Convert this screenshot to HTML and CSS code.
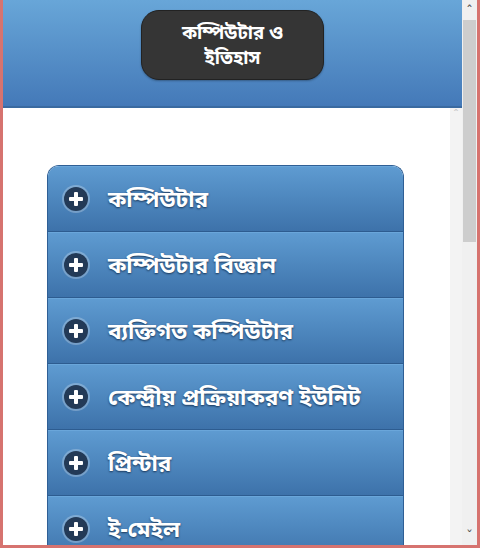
FILE: index.html
```html
<!DOCTYPE html>
<html lang="bn">
<head>
    <meta charset="UTF-8">
    <meta name="viewport" content="width=device-width, initial-scale=1.0">
    <title>কম্পিউটার ও ইতিহাস</title>
    <link rel="stylesheet" href="styles.css">
</head>
<body>

    <div class="frame">
        <div class="page">
            <!-- Шапка с кнопкой -->
            <div class="header">
                <div class="title-pill">কম্পিউটার ও<br>ইতিহাস</div>
            </div>

            <div class="content">
                <div class="scroll-area">
                    <ul class="menu">
                        <li class="menu-item"><span class="plus"></span>কম্পিউটার</li>
                        <li class="menu-item"><span class="plus"></span>কম্পিউটার বিজ্ঞান</li>
                        <li class="menu-item"><span class="plus"></span>ব্যক্তিগত কম্পিউটার</li>
                        <li class="menu-item"><span class="plus"></span>কেন্দ্রীয় প্রক্রিয়াকরণ ইউনিট</li>
                        <li class="menu-item"><span class="plus"></span>প্রিন্টার</li>
                        <li class="menu-item"><span class="plus"></span>ই-মেইল</li>
                    </ul>
                </div>
                <div class="inner-scroll"><span class="arrow-up small">&#710;</span></div>
            </div>
        </div>

        <!-- Полоса прокрутки окна -->
        <div class="scrollbar">
            <div class="sb-arrow">&#710;</div>
            <div class="sb-thumb"></div>
            <div class="sb-space"></div>
            <div class="sb-arrow down">&#711;</div>
        </div>
    </div>

</body>
</html>
```

FILE: styles.css
```css
body {
    margin: 0;
    overflow: hidden;
    font-family: "Noto Sans Bengali", "Vrinda", "Noto Sans", "DejaVu Sans", sans-serif;
    background-color: #ffffff;
}

.frame {
    display: flex;
    width: 474px;
    height: 545px;
    border: 3px solid #d6736f;
    border-top: none;
}

.page {
    flex: 1;
    display: flex;
    flex-direction: column;
    min-width: 0;
}

.header {
    height: 108px;
    border-bottom: 2px solid #3a6aa0;
    background: linear-gradient(#68a6d8, #4479b8);
    display: flex;
    justify-content: center;
    padding-top: 10px;
    box-sizing: border-box;
}

.title-pill {
    width: 183px;
    height: 70px;
    box-sizing: border-box;
    background-color: #353535;
    border: 1px solid #222222;
    border-radius: 18px;
    color: #ffffff;
    font-weight: bold;
    font-size: 18.5px;
    line-height: 25px;
    text-align: center;
    padding-top: 11px;
    box-shadow: 0 1px 2px rgba(0, 0, 0, 0.3);
}

.content {
    flex: 1;
    display: flex;
    min-height: 0;
}

.scroll-area {
    flex: 1;
    overflow: hidden;
    padding: 57px 46px 0 44px;
}

.inner-scroll {
    width: 12px;
    background-color: #f3f3f3;
    text-align: center;
    color: #c8c8c8;
    font-size: 12px;
    line-height: 16px;
}

.menu {
    list-style: none;
    margin: 0;
    padding: 0;
    border-radius: 12px 12px 0 0;
    overflow: hidden;
    border: 1px solid #2f5f95;
    border-bottom: none;
}

.menu-item {
    height: 66px;
    box-sizing: border-box;
    display: flex;
    align-items: center;
    padding-left: 16px;
    padding-top: 3px;
    background: linear-gradient(#5e9bd1, #3d72aa);
    border-bottom: 1px solid #2d5c90;
    border-top: 1px solid #6aa6da;
    color: #ffffff;
    font-weight: bold;
    font-size: 22.5px;
    text-shadow: 0 1px 2px #1a3658;
}

/* Круглая иконка с плюсом */
.plus {
    position: relative;
    width: 24px;
    height: 24px;
    border-radius: 50%;
    background-color: #233a57;
    box-shadow: 0 0 0 2px rgba(255, 255, 255, 0.25);
    margin-right: 20px;
    margin-top: -3px;
    flex-shrink: 0;
}

.plus::before,
.plus::after {
    content: "";
    position: absolute;
    background-color: #ffffff;
    border-radius: 1px;
}

.plus::before {
    left: 5px;
    top: 10px;
    width: 14px;
    height: 4px;
}

.plus::after {
    left: 10px;
    top: 5px;
    width: 4px;
    height: 14px;
}

.scrollbar {
    width: 15px;
    display: flex;
    flex-direction: column;
    background-color: #f0f0f0;
}

.sb-arrow {
    height: 20px;
    text-align: center;
    font-family: "DejaVu Sans", sans-serif;
    font-size: 14px;
    line-height: 22px;
    color: #505050;
}

.sb-arrow.down {
    height: 16px;
    line-height: 14px;
}

.sb-thumb {
    height: 222px;
    margin: 0 1px;
    background-color: #cdcdcd;
}

.sb-space {
    flex: 1;
}
```
